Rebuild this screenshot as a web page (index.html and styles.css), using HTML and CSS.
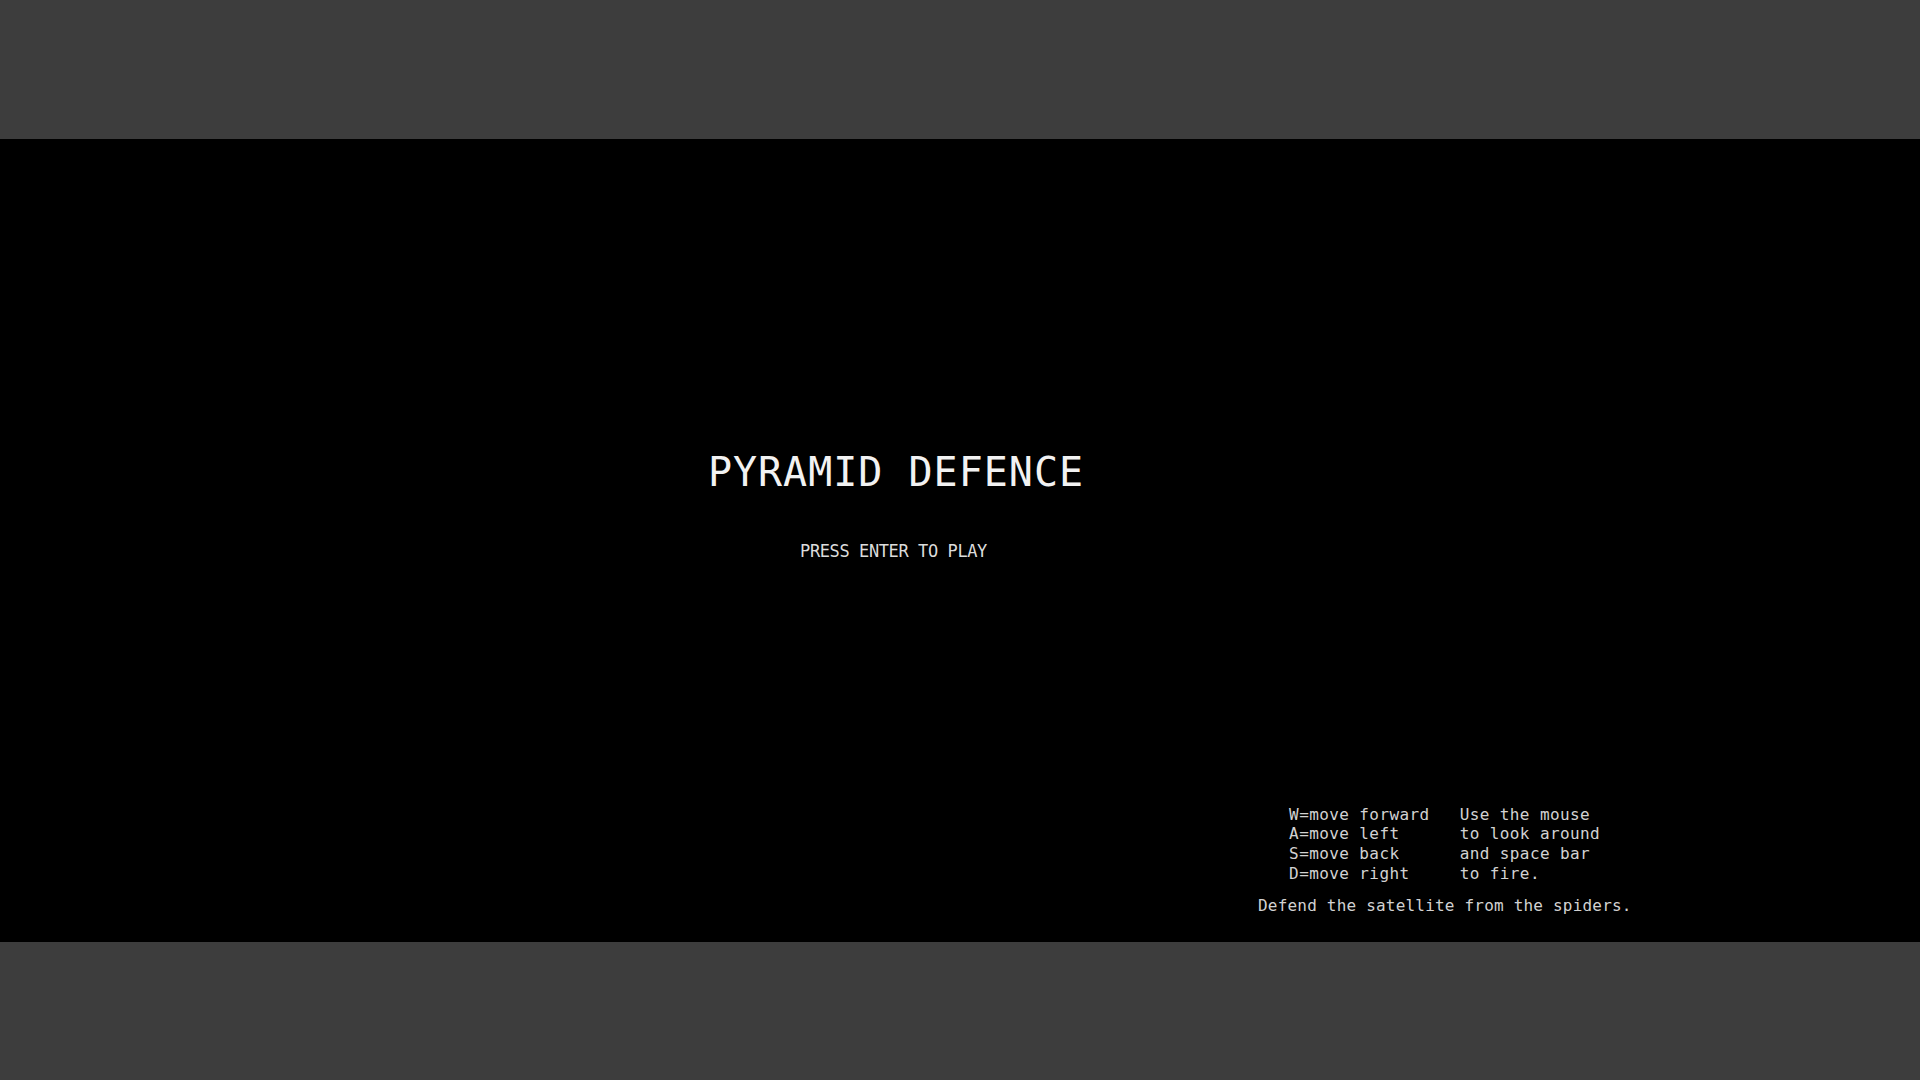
FILE: index.html
```html
<!DOCTYPE html>
<html lang="en">
<head>
<meta charset="utf-8">
<title>Pyramid Defence</title>
<link rel="stylesheet" href="styles.css">
</head>
<body>
<div class="viewport">
  <main class="stage">
    <div class="menu">
      <h1 class="title">PYRAMID DEFENCE</h1>
      <p class="prompt">PRESS ENTER TO PLAY</p>
    </div>
    <section class="help">
      <pre class="keys">   W=move forward   Use the mouse
   A=move left      to look around
   S=move back      and space bar
   D=move right     to fire.</pre>
      <p class="goal">Defend the satellite from the spiders.</p>
    </section>
  </main>
</div>
</body>
</html>
```
FILE: styles.css
```css
html, body {
  margin: 0;
  padding: 0;
  background: #3d3d3d;
}
.viewport {
  height: 1080px;
  display: flex;
  flex-direction: column;
  justify-content: center;
}
.stage {
  height: 803px;
  background: #000;
  display: flex;
  flex-direction: column;
  font-family: "DejaVu Sans Mono", monospace;
}
.menu {
  padding-top: 313px;
  padding-right: 128px;
  display: flex;
  flex-direction: column;
  align-items: center;
}
.title {
  margin: 0;
  font-size: 40px;
  line-height: 40px;
  font-weight: normal;
  letter-spacing: 1px;
  color: #f2f2f2;
}
.prompt {
  margin: 51px 5px 0 0;
  font-size: 17px;
  line-height: 17px;
  letter-spacing: -0.4px;
  color: #dcdcdc;
}
.help {
  margin-top: 245px;
  margin-left: 1259px;
  color: #d2d2d2;
  font-size: 16px;
}
.keys {
  margin: 0;
  font-family: inherit;
  font-size: inherit;
  line-height: 19.7px;
  letter-spacing: 0.4px;
}
.goal {
  margin: 13px 0 0 -1px;
  line-height: 19.7px;
  letter-spacing: 0.2px;
}
```
